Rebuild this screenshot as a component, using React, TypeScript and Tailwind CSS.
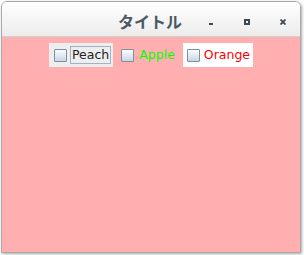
import React from 'react';

function Box() {
  return (
    <span className="block w-[13px] h-[13px] border border-[#7f8ea0] rounded-[1px] bg-gradient-to-b from-[#fbfcfe] to-[#c9d6e6] shrink-0" />
  );
}

export default function App() {
  return (
    <div className="w-[304px] h-[255px] bg-white pl-[1px] pt-[1px] pr-[3px] pb-[2px] font-['DejaVu_Sans',sans-serif]">
      <div className="h-full flex flex-col border border-[#a8a8a8] rounded-t-[6px] overflow-hidden shadow-[1px_1px_3px_rgba(0,0,0,0.35)]">
        {/* TITLE BAR */}
        <div className="h-[35px] shrink-0 bg-gradient-to-b from-[#ffffff] to-[#ececec] border-b border-[#d0d0d0] relative">
          <span className="absolute left-[116px] top-[9px] text-[16px] font-bold text-[#4c5862] font-['Noto_Sans_CJK_JP',sans-serif] leading-[20px]">タイトル</span>
          <span className="absolute left-[207px] top-[21px] w-[4px] h-[2px] bg-[#3d4a55]" />
          <span className="absolute left-[242px] top-[17px] w-[6px] h-[6px] border-2 border-[#3d4a55]" />
          <svg className="absolute left-[278px] top-[17px]" width="6" height="6" viewBox="0 0 6 6">
            <path d="M0.5 0.5 L5.5 5.5 M5.5 0.5 L0.5 5.5" stroke="#3d4a55" strokeWidth="1.8" />
          </svg>
        </div>

        {/* CONTENT */}
        <div className="flex-1 bg-[#ffafaf] flex justify-center items-start gap-[5px] pt-[6px] text-[12.5px] leading-[16px]">
          <div className="h-[24px] bg-[#eeeeee] flex items-center pl-[5px] pr-[2px] gap-[3px]">
            <Box />
            <span className="border border-[#9fb3c8] h-[18px] px-[1px] flex items-center text-[#222222]">Peach</span>
          </div>
          <div className="h-[24px] flex items-center pl-[3px] pr-[3px] gap-[5px]">
            <Box />
            <span className="text-[#00ff00]">Apple</span>
          </div>
          <div className="h-[24px] bg-white flex items-center pl-[4px] pr-[3px] gap-[4px]">
            <Box />
            <span className="text-[#ff0000]">Orange</span>
          </div>
        </div>
      </div>
    </div>
  );
}
